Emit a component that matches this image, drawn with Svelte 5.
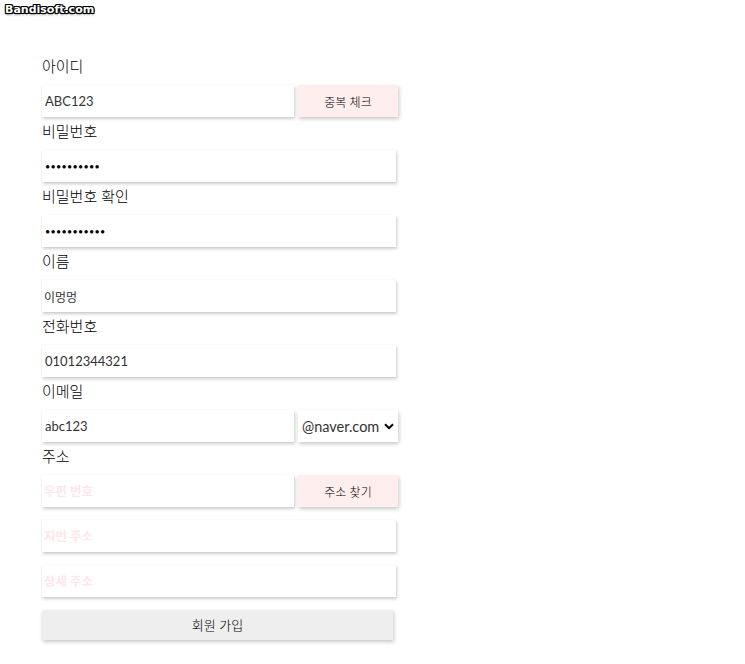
<script>
  const domains = ['@naver.com', '@gmail.com', '@daum.net'];
</script>

<div class="watermark">Bandisoft.com</div>

<form class="signup" onsubmit={(e) => e.preventDefault()}>
  <div class="label">아이디</div>
  <div class="row">
    <input class="short" type="text" value="ABC123" />
    <button type="button" class="side pink">중복 체크</button>
  </div>

  <div class="label">비밀번호</div>
  <div class="row"><input class="full" type="password" value="abcd123456" /></div>

  <div class="label">비밀번호 확인</div>
  <div class="row"><input class="full" type="password" value="abcd1234567" /></div>

  <div class="label">이름</div>
  <div class="row"><input class="full name" type="text" value="이멍멍" /></div>

  <div class="label">전화번호</div>
  <div class="row"><input class="full" type="text" value="01012344321" /></div>

  <div class="label">이메일</div>
  <div class="row">
    <input class="short" type="text" value="abc123" />
    <div class="side select-wrap">
      <select>
        {#each domains as d}
          <option>{d}</option>
        {/each}
      </select>
      <svg class="chevron" width="10" height="7" viewBox="0 0 10 7">
        <path d="M1 1.2 5 5.2 9 1.2" fill="none" stroke="#000" stroke-width="2" />
      </svg>
    </div>
  </div>

  <div class="label">주소</div>
  <div class="row">
    <input class="short" type="text" placeholder="우편 번호" />
    <button type="button" class="side pink">주소 찾기</button>
  </div>
  <div class="row gap"><input class="full" type="text" placeholder="지번 주소" /></div>
  <div class="row gap"><input class="full" type="text" placeholder="상세 주소" /></div>

  <button type="submit" class="submit">회원 가입</button>
</form>

<style>
  :global(body) {
    background: #fff;
    font-family: "Lato", "Noto Sans CJK KR", sans-serif;
    font-weight: 300;
    color: #000;
  }

  .watermark {
    position: absolute;
    top: 3px;
    left: 5px;
    font-family: "DejaVu Sans", sans-serif;
    font-weight: 700;
    font-size: 11px;
    line-height: 14px;
    color: #fff;
    text-shadow: 1px 0 0 #000, -1px 0 0 #000, 0 1px 0 #000, 0 -1px 0 #000, 1px 1px 0 #000, -1px -1px 0 #000, 1px -1px 0 #000, -1px 1px 0 #000, 0 2px 2px #888;
  }

  .signup {
    padding: 52px 0 24px 42px;
    width: 400px;
  }

  .label {
    height: 33px;
    line-height: 28px;
    font-size: 15px;
  }

  .row {
    display: flex;
    gap: 4px;
    height: 32px;
  }

  .row.gap {
    margin-top: 13px;
  }

  input,
  select,
  button {
    box-sizing: border-box;
    height: 32px;
    border: none;
    outline: none;
    font-family: inherit;
    font-weight: 300;
    color: #000;
  }

  input {
    padding: 0 2px 0 3px;
    font-size: 13px;
    font-weight: 400;
    color: #333;
    background: #fff;
    box-shadow: 1px 2px 3px rgba(0, 0, 0, 0.2), 0 0 2px rgba(0, 0, 0, 0.04);
  }

  input:placeholder-shown {
    padding-left: 2px;
  }

  input[type="password"] {
    font-size: 9px;
    letter-spacing: 0.27px;
    color: #000;
  }

  input.name {
    padding-left: 2px;
    font-size: 12px;
  }

  input::placeholder {
    color: #ffe6ea;
    font-weight: 700;
    font-size: 12.5px;
  }

  .full {
    width: 354px;
  }

  .short {
    width: 252px;
  }

  .side {
    width: 100px;
    box-shadow: 1px 2px 4px rgba(0, 0, 0, 0.22);
  }

  .select-wrap {
    position: relative;
    height: 32px;
  }

  select {
    appearance: none;
    width: 100%;
    background: #fff;
    font-size: 14.5px;
    font-weight: 400;
    color: #333;
    padding: 0 0 0 4px;
  }

  .chevron {
    position: absolute;
    top: 13px;
    right: 4px;
    pointer-events: none;
  }

  .pink {
    background: #ffeeee;
    font-size: 12px;
  }

  .submit {
    display: block;
    width: 351px;
    height: 30px;
    margin-top: 13px;
    padding: 0 0 2px;
    background: #eeeeee;
    font-size: 13px;
    box-shadow: 1px 2px 4px rgba(0, 0, 0, 0.22);
  }
</style>
